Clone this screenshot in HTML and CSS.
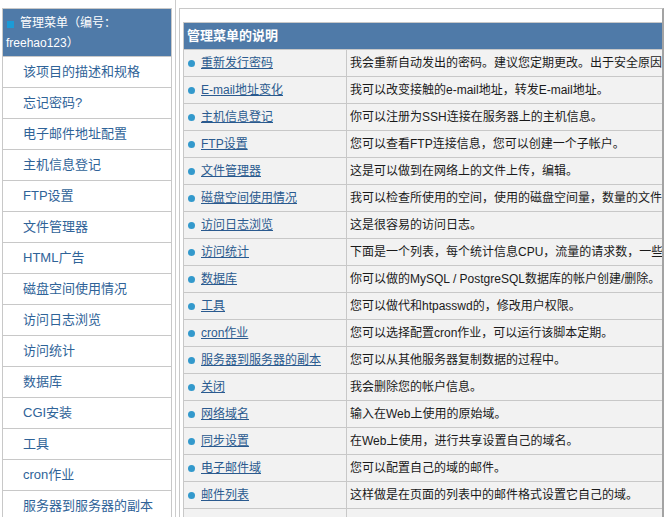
FILE: index.html
```html
<!DOCTYPE html>
<html lang="zh-CN">
<head>
<meta charset="utf-8">
<title>管理菜单</title>
<link rel="stylesheet" href="styles.css">
</head>
<body>
<div class="page">
  <div class="side-col">
    <div class="menu">
      <div class="menu-head"><span class="sq"></span>管理菜单（编号：freehao123）</div>
      <a class="menu-item" href="#">该项目的描述和规格</a>
      <a class="menu-item" href="#">忘记密码?</a>
      <a class="menu-item" href="#">电子邮件地址配置</a>
      <a class="menu-item" href="#">主机信息登记</a>
      <a class="menu-item" href="#">FTP设置</a>
      <a class="menu-item" href="#">文件管理器</a>
      <a class="menu-item" href="#">HTML广告</a>
      <a class="menu-item" href="#">磁盘空间使用情况</a>
      <a class="menu-item" href="#">访问日志浏览</a>
      <a class="menu-item" href="#">访问统计</a>
      <a class="menu-item" href="#">数据库</a>
      <a class="menu-item" href="#">CGI安装</a>
      <a class="menu-item" href="#">工具</a>
      <a class="menu-item" href="#">cron作业</a>
      <a class="menu-item" href="#">服务器到服务器的副本</a>
    </div>
  </div>
  <div class="main-col">
    <div class="main-box">
      <table class="desc">
        <colgroup><col class="c1"><col class="c2"></colgroup>
        <tr><th colspan="2">管理菜单的说明</th></tr>
        <tr><td class="name"><span class="dot"></span><a href="#">重新发行密码</a></td><td class="text">我会重新自动发出的密码。建议您定期更改。出于安全原因，请妥善保管。</td></tr>
        <tr><td class="name"><span class="dot"></span><a href="#">E-mail地址变化</a></td><td class="text">我可以改变接触的e-mail地址，转发E-mail地址。</td></tr>
        <tr><td class="name"><span class="dot"></span><a href="#">主机信息登记</a></td><td class="text">你可以注册为SSH连接在服务器上的主机信息。</td></tr>
        <tr><td class="name"><span class="dot"></span><a href="#">FTP设置</a></td><td class="text">您可以查看FTP连接信息，您可以创建一个子帐户。</td></tr>
        <tr><td class="name"><span class="dot"></span><a href="#">文件管理器</a></td><td class="text">这是可以做到在网络上的文件上传，编辑。</td></tr>
        <tr><td class="name"><span class="dot"></span><a href="#">磁盘空间使用情况</a></td><td class="text">我可以检查所使用的空间，使用的磁盘空间量，数量的文件。</td></tr>
        <tr><td class="name"><span class="dot"></span><a href="#">访问日志浏览</a></td><td class="text">这是很容易的访问日志。</td></tr>
        <tr><td class="name"><span class="dot"></span><a href="#">访问统计</a></td><td class="text">下面是一个列表，每个统计信息CPU，流量的请求数，一些统计。</td></tr>
        <tr><td class="name"><span class="dot"></span><a href="#">数据库</a></td><td class="text">你可以做的MySQL / PostgreSQL数据库的帐户创建/删除。</td></tr>
        <tr><td class="name"><span class="dot"></span><a href="#">工具</a></td><td class="text">您可以做代和htpasswd的，修改用户权限。</td></tr>
        <tr><td class="name"><span class="dot"></span><a href="#">cron作业</a></td><td class="text">您可以选择配置cron作业，可以运行该脚本定期。</td></tr>
        <tr><td class="name"><span class="dot"></span><a href="#">服务器到服务器的副本</a></td><td class="text">您可以从其他服务器复制数据的过程中。</td></tr>
        <tr><td class="name"><span class="dot"></span><a href="#">关闭</a></td><td class="text">我会删除您的帐户信息。</td></tr>
        <tr><td class="name"><span class="dot"></span><a href="#">网络域名</a></td><td class="text">输入在Web上使用的原始域。</td></tr>
        <tr><td class="name"><span class="dot"></span><a href="#">同步设置</a></td><td class="text">在Web上使用，进行共享设置自己的域名。</td></tr>
        <tr><td class="name"><span class="dot"></span><a href="#">电子邮件域</a></td><td class="text">您可以配置自己的域的邮件。</td></tr>
        <tr><td class="name"><span class="dot"></span><a href="#">邮件列表</a></td><td class="text">这样做是在页面的列表中的邮件格式设置它自己的域。</td></tr>
        <tr><td class="name">&nbsp;</td><td class="text">&nbsp;</td></tr>
      </table>
    </div>
  </div>
</div>
</body>
</html>
```

FILE: styles.css
```css
html, body {
  margin: 0;
  padding: 0;
  background: #ffffff;
}

body {
  font-family: "Liberation Sans", "Noto Sans CJK SC", sans-serif;
  font-size: 13px;
  color: #222222;
}

.page {
  display: flex;
  height: 517px;
  overflow: hidden;
}

/* left column */
.side-col {
  flex: none;
  width: 175px;
  border-right: 1px solid #cccccc;
}

.menu {
  margin: 8px 0 0 2px;
  width: 168px;
  border: 1px solid #c8c8c8;
}

.menu-head {
  background: #4f7aa8;
  color: #ffffff;
  font-size: 12px;
  line-height: 20px;
  padding: 4px 4px 3px 3px;
  border-bottom: 1px solid #c8c8c8;
}

.sq {
  display: inline-block;
  width: 7px;
  height: 7px;
  background: #1b9bd7;
  margin: 0 6px 0 1px;
  vertical-align: -1px;
}

.menu-item {
  display: block;
  height: 30px;
  line-height: 30px;
  padding-left: 20px;
  border-bottom: 1px solid #c8c8c8;
  color: #2f6398;
  text-decoration: none;
  white-space: nowrap;
}

/* main column */
.main-col {
  flex: none;
  width: 488px;
  box-sizing: border-box;
  padding: 8px 0 0 3px;
}

.main-box {
  box-sizing: border-box;
  height: 100%;
  border-top: 1px solid #c8c8c8;
  border-left: 1px solid #c8c8c8;
  border-right: 2px solid #a3a3a3;
  padding: 13px 0 0 3px;
  overflow: hidden;
}

.desc {
  border-collapse: collapse;
  table-layout: fixed;
  width: 760px;
  border: 1px solid #c8c8c8;
}

.c1 { width: 163px; }

.desc th {
  background: #4f7aa8;
  color: #ffffff;
  font-size: 13px;
  font-weight: bold;
  text-align: left;
  height: 26px;
  line-height: 26px;
  padding: 0 0 0 3px;
  border: 1px solid #c8c8c8;
}

.desc td {
  background: #f2f2f2;
  border: 1px solid #c8c8c8;
  font-size: 12px;
  height: 26px;
  line-height: 26px;
  padding: 0;
  white-space: nowrap;
  overflow: hidden;
}

.desc td.name {
  padding-left: 4px;
}

.desc td.text {
  padding-left: 3px;
  color: #1a1a1a;
}

.dot {
  display: inline-block;
  width: 7px;
  height: 7px;
  border-radius: 50%;
  background: #3399cc;
  margin-right: 6px;
  vertical-align: 0;
}

.desc a {
  color: #2a5a8f;
  text-decoration: underline;
}
```
